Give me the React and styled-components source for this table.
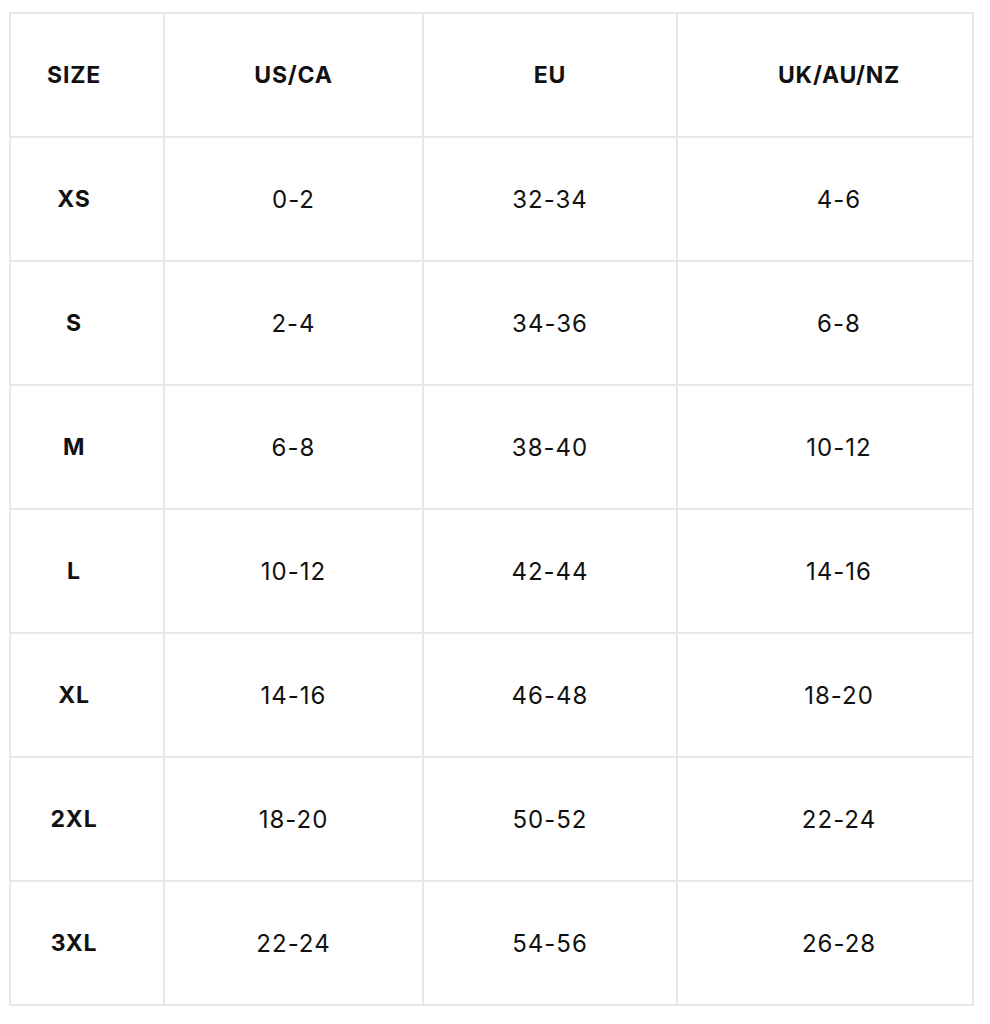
import React from 'react';
import styled, { createGlobalStyle } from 'styled-components';

const lineColor = '#e8e8e8';

const GlobalStyle = createGlobalStyle`
  body {
    margin: 0;
    background: #ffffff;
    font-family: Inter, "Liberation Sans", sans-serif;
    color: #111111;
  }
`;

const Page = styled.div`
  padding: 12px 0 0 9px;
`;

const Chart = styled.div`
  display: grid;
  grid-template-columns: 154px 259px 254px 296px;
  grid-auto-rows: 124px;
  width: max-content;
  border-left: 2px solid ${lineColor};
  border-top: 2px solid ${lineColor};
`;

const Cell = styled.div`
  box-sizing: border-box;
  display: flex;
  align-items: center;
  justify-content: center;
  border-right: 2px solid ${lineColor};
  border-bottom: 2px solid ${lineColor};
  font-size: ${({ $bold }) => ($bold ? '23px' : '24px')};
  font-weight: ${({ $bold }) => ($bold ? 700 : 400)};
  letter-spacing: ${({ $bold }) => ($bold ? '0.8px' : '1px')};
  padding-right: ${({ $col }) => ($col === 0 ? '26px' : '0')};
  padding-left: ${({ $col }) => ($col === 3 ? '28px' : '0')};
`;

const header = ['SIZE', 'US/CA', 'EU', 'UK/AU/NZ'];

const rows = [
  ['XS', '0-2', '32-34', '4-6'],
  ['S', '2-4', '34-36', '6-8'],
  ['M', '6-8', '38-40', '10-12'],
  ['L', '10-12', '42-44', '14-16'],
  ['XL', '14-16', '46-48', '18-20'],
  ['2XL', '18-20', '50-52', '22-24'],
  ['3XL', '22-24', '54-56', '26-28'],
];

const App = () => {
  return (
    <Page>
      <GlobalStyle />
      <Chart>
        {header.map((label, i) => (
          <Cell key={label} $col={i} $bold>{label}</Cell>
        ))}
        {rows.map((row) =>
          row.map((value, i) => (
            <Cell key={row[0] + i} $col={i} $bold={i === 0}>
              {value}
            </Cell>
          ))
        )}
      </Chart>
    </Page>
  );
};

export default App;
